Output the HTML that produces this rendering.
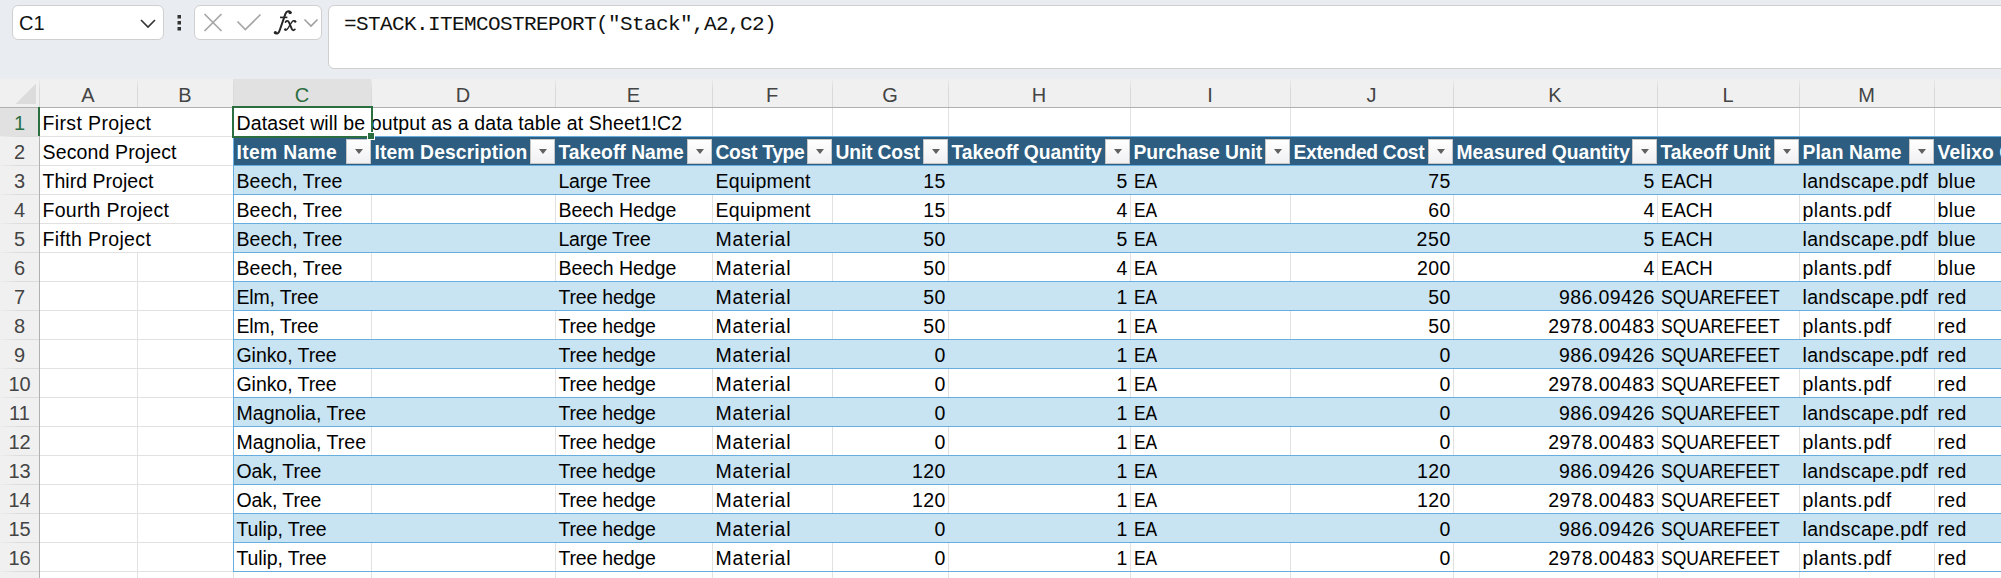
<!DOCTYPE html><html><head><meta charset="utf-8"><style>
*{box-sizing:border-box;margin:0;padding:0}
html,body{width:2001px;height:578px;overflow:hidden;background:#e9ecf0;font-family:"Liberation Sans",sans-serif;}
.a{position:absolute}
.t{position:absolute;white-space:pre;font-size:19.5px;line-height:29px;color:#000;}
.num{letter-spacing:0.3px}
.lc{letter-spacing:0.35px}
.cap{letter-spacing:-1.4px}

.r{text-align:right}
.h{font-weight:bold;color:#fff;font-size:19.3px;word-spacing:0}
.ch{position:absolute;top:81px;height:28px;text-align:center;font-size:20px;line-height:28px;color:#4a4a4a}
.rh{position:absolute;left:0;width:39px;text-align:center;font-size:20px;line-height:29px;color:#444}
.fb{position:absolute;width:25px;height:25px;background:linear-gradient(#fff,#f0f0f3);border:1px solid #c6c6c6;}
.fb:after{content:"";position:absolute;left:7.5px;top:9px;border-left:4.5px solid transparent;border-right:4.5px solid transparent;border-top:5.5px solid #606060}

</style></head><body>
<div class="a" style="left:12px;top:5px;width:152px;height:35px;background:#fff;border:1px solid #cfcfcf;border-radius:6px"></div>
<div class="a" style="left:19px;top:6px;font-size:20px;line-height:35px;color:#111">C1</div>
<svg class="a" style="left:138px;top:16px" width="20" height="14"><path d="M3 4 L10 11 L17 4" fill="none" stroke="#333" stroke-width="1.6"/></svg>
<svg class="a" style="left:175px;top:12px" width="8" height="22"><rect x="2.5" y="3" width="3.5" height="3.5" fill="#333"/><rect x="2.5" y="9" width="3.5" height="3.5" fill="#333"/><rect x="2.5" y="15" width="3.5" height="3.5" fill="#333"/></svg>
<div class="a" style="left:194px;top:5px;width:128px;height:35px;background:#fff;border:1px solid #cfcfcf;border-radius:6px"></div>
<svg class="a" style="left:200px;top:10px" width="125" height="30"><path d="M4.5 4 L21.5 21 M21.5 4 L4.5 21" stroke="#a6a6a6" stroke-width="1.7" fill="none"/><path d="M37.5 11.5 L45.3 19.5 L60.5 4.5" stroke="#a6a6a6" stroke-width="1.7" fill="none"/><path d="M104.5 9.5 L111 16 L117.5 9.5" stroke="#a0a0a0" stroke-width="1.6" fill="none"/></svg>
<svg class="a" style="left:0;top:0" width="330" height="45"><path d="M290.8 12.6 C289.8 10.4 286.6 10.6 285.4 13.8 L279.8 30.0 C278.8 33.4 276.6 34.4 275.0 32.8" fill="none" stroke="#262626" stroke-width="2.0" stroke-linecap="round"/><circle cx="290.0" cy="12.6" r="1.6" fill="#262626"/><circle cx="275.4" cy="32.6" r="1.6" fill="#262626"/><path d="M280.0 17.4 L287.4 17.4" stroke="#262626" stroke-width="1.6"/><path d="M285.6 22.0 C286.6 20.6 288.2 20.4 288.9 22.2 L291.9 29.0 C292.4 30.4 293.6 30.6 294.8 29.4" fill="none" stroke="#262626" stroke-width="1.9" stroke-linecap="round"/><path d="M295.6 21.4 C294.4 20.2 293.0 20.6 291.8 22.2 L288.2 27.8 C287.0 29.8 285.6 30.6 284.8 29.6" fill="none" stroke="#262626" stroke-width="1.3" stroke-linecap="round"/><circle cx="295.2" cy="21.6" r="1.2" fill="#262626"/><circle cx="285.4" cy="29.4" r="1.2" fill="#262626"/></svg>
<div class="a" style="left:328px;top:5px;width:1700px;height:64px;background:#fff;border:1px solid #cfcfcf;border-radius:6px"></div>
<div class="a" style="left:344px;top:10px;font-family:'Liberation Mono',monospace;font-size:21px;letter-spacing:-0.6px;line-height:30px;color:#111;white-space:pre">=STACK.ITEMCOSTREPORT("Stack",A2,C2)</div>
<div class="a" style="left:0;top:79px;width:2001px;height:499px;background:#fff"></div>
<div class="a" style="left:0;top:79px;width:2001px;height:28px;background:#f0f0f0"></div>
<div class="a" style="left:0;top:107px;width:39px;height:471px;background:#f0f0f0"></div>
<div class="a" style="left:233px;top:79px;width:138px;height:28px;background:#e1e1e1"></div>
<div class="a" style="left:0;top:107px;width:39px;height:29px;background:#e1e1e1"></div>
<svg class="a" style="left:0;top:79px" width="39" height="28"><path d="M36 4.5 L36 25 L15.5 25 Z" fill="#dcdcdc"/></svg>
<div class="a" style="left:39px;top:79px;width:1px;height:28px;background:linear-gradient(rgba(217,217,217,0.2),#d9d9d9 40%)"></div>
<div class="a" style="left:137px;top:79px;width:1px;height:28px;background:linear-gradient(rgba(217,217,217,0.2),#d9d9d9 40%)"></div>
<div class="a" style="left:233px;top:79px;width:1px;height:28px;background:linear-gradient(rgba(217,217,217,0.2),#d9d9d9 40%)"></div>
<div class="a" style="left:371px;top:79px;width:1px;height:28px;background:linear-gradient(rgba(217,217,217,0.2),#d9d9d9 40%)"></div>
<div class="a" style="left:555px;top:79px;width:1px;height:28px;background:linear-gradient(rgba(217,217,217,0.2),#d9d9d9 40%)"></div>
<div class="a" style="left:712px;top:79px;width:1px;height:28px;background:linear-gradient(rgba(217,217,217,0.2),#d9d9d9 40%)"></div>
<div class="a" style="left:832px;top:79px;width:1px;height:28px;background:linear-gradient(rgba(217,217,217,0.2),#d9d9d9 40%)"></div>
<div class="a" style="left:948px;top:79px;width:1px;height:28px;background:linear-gradient(rgba(217,217,217,0.2),#d9d9d9 40%)"></div>
<div class="a" style="left:1130px;top:79px;width:1px;height:28px;background:linear-gradient(rgba(217,217,217,0.2),#d9d9d9 40%)"></div>
<div class="a" style="left:1290px;top:79px;width:1px;height:28px;background:linear-gradient(rgba(217,217,217,0.2),#d9d9d9 40%)"></div>
<div class="a" style="left:1453px;top:79px;width:1px;height:28px;background:linear-gradient(rgba(217,217,217,0.2),#d9d9d9 40%)"></div>
<div class="a" style="left:1657px;top:79px;width:1px;height:28px;background:linear-gradient(rgba(217,217,217,0.2),#d9d9d9 40%)"></div>
<div class="a" style="left:1799px;top:79px;width:1px;height:28px;background:linear-gradient(rgba(217,217,217,0.2),#d9d9d9 40%)"></div>
<div class="a" style="left:1934px;top:79px;width:1px;height:28px;background:linear-gradient(rgba(217,217,217,0.2),#d9d9d9 40%)"></div>
<div class="a" style="left:0;top:107px;width:2001px;height:1px;background:#b0b0b0"></div>
<div class="a" style="left:39px;top:107px;width:1px;height:471px;background:#b0b0b0"></div>
<div class="ch" style="left:39px;width:98px;color:#444">A</div>
<div class="ch" style="left:137px;width:96px;color:#444">B</div>
<div class="ch" style="left:233px;width:138px;color:#2b6e3f">C</div>
<div class="ch" style="left:371px;width:184px;color:#444">D</div>
<div class="ch" style="left:555px;width:157px;color:#444">E</div>
<div class="ch" style="left:712px;width:120px;color:#444">F</div>
<div class="ch" style="left:832px;width:116px;color:#444">G</div>
<div class="ch" style="left:948px;width:182px;color:#444">H</div>
<div class="ch" style="left:1130px;width:160px;color:#444">I</div>
<div class="ch" style="left:1290px;width:163px;color:#444">J</div>
<div class="ch" style="left:1453px;width:204px;color:#444">K</div>
<div class="ch" style="left:1657px;width:142px;color:#444">L</div>
<div class="ch" style="left:1799px;width:135px;color:#444">M</div>
<div class="ch" style="left:1934px;width:146px;color:#444">N</div>
<div class="a" style="left:137px;top:252px;width:1px;height:326px;background:#e1e1e1"></div>
<div class="a" style="left:233px;top:108px;width:1px;height:470px;background:#e1e1e1"></div>
<div class="a" style="left:371px;top:136px;width:1px;height:442px;background:#e1e1e1"></div>
<div class="a" style="left:555px;top:136px;width:1px;height:442px;background:#e1e1e1"></div>
<div class="a" style="left:712px;top:108px;width:1px;height:470px;background:#e1e1e1"></div>
<div class="a" style="left:832px;top:108px;width:1px;height:470px;background:#e1e1e1"></div>
<div class="a" style="left:948px;top:108px;width:1px;height:470px;background:#e1e1e1"></div>
<div class="a" style="left:1130px;top:108px;width:1px;height:470px;background:#e1e1e1"></div>
<div class="a" style="left:1290px;top:108px;width:1px;height:470px;background:#e1e1e1"></div>
<div class="a" style="left:1453px;top:108px;width:1px;height:470px;background:#e1e1e1"></div>
<div class="a" style="left:1657px;top:108px;width:1px;height:470px;background:#e1e1e1"></div>
<div class="a" style="left:1799px;top:108px;width:1px;height:470px;background:#e1e1e1"></div>
<div class="a" style="left:1934px;top:108px;width:1px;height:470px;background:#e1e1e1"></div>
<div class="a" style="left:40px;top:136px;width:1961px;height:1px;background:#e1e1e1"></div>
<div class="a" style="left:0;top:136px;width:39px;height:1px;background:linear-gradient(to right,rgba(220,220,220,0.2),#dcdcdc 50%)"></div>
<div class="a" style="left:40px;top:165px;width:1961px;height:1px;background:#e1e1e1"></div>
<div class="a" style="left:0;top:165px;width:39px;height:1px;background:linear-gradient(to right,rgba(220,220,220,0.2),#dcdcdc 50%)"></div>
<div class="a" style="left:40px;top:194px;width:1961px;height:1px;background:#e1e1e1"></div>
<div class="a" style="left:0;top:194px;width:39px;height:1px;background:linear-gradient(to right,rgba(220,220,220,0.2),#dcdcdc 50%)"></div>
<div class="a" style="left:40px;top:223px;width:1961px;height:1px;background:#e1e1e1"></div>
<div class="a" style="left:0;top:223px;width:39px;height:1px;background:linear-gradient(to right,rgba(220,220,220,0.2),#dcdcdc 50%)"></div>
<div class="a" style="left:40px;top:252px;width:1961px;height:1px;background:#e1e1e1"></div>
<div class="a" style="left:0;top:252px;width:39px;height:1px;background:linear-gradient(to right,rgba(220,220,220,0.2),#dcdcdc 50%)"></div>
<div class="a" style="left:40px;top:281px;width:1961px;height:1px;background:#e1e1e1"></div>
<div class="a" style="left:0;top:281px;width:39px;height:1px;background:linear-gradient(to right,rgba(220,220,220,0.2),#dcdcdc 50%)"></div>
<div class="a" style="left:40px;top:310px;width:1961px;height:1px;background:#e1e1e1"></div>
<div class="a" style="left:0;top:310px;width:39px;height:1px;background:linear-gradient(to right,rgba(220,220,220,0.2),#dcdcdc 50%)"></div>
<div class="a" style="left:40px;top:339px;width:1961px;height:1px;background:#e1e1e1"></div>
<div class="a" style="left:0;top:339px;width:39px;height:1px;background:linear-gradient(to right,rgba(220,220,220,0.2),#dcdcdc 50%)"></div>
<div class="a" style="left:40px;top:368px;width:1961px;height:1px;background:#e1e1e1"></div>
<div class="a" style="left:0;top:368px;width:39px;height:1px;background:linear-gradient(to right,rgba(220,220,220,0.2),#dcdcdc 50%)"></div>
<div class="a" style="left:40px;top:397px;width:1961px;height:1px;background:#e1e1e1"></div>
<div class="a" style="left:0;top:397px;width:39px;height:1px;background:linear-gradient(to right,rgba(220,220,220,0.2),#dcdcdc 50%)"></div>
<div class="a" style="left:40px;top:426px;width:1961px;height:1px;background:#e1e1e1"></div>
<div class="a" style="left:0;top:426px;width:39px;height:1px;background:linear-gradient(to right,rgba(220,220,220,0.2),#dcdcdc 50%)"></div>
<div class="a" style="left:40px;top:455px;width:1961px;height:1px;background:#e1e1e1"></div>
<div class="a" style="left:0;top:455px;width:39px;height:1px;background:linear-gradient(to right,rgba(220,220,220,0.2),#dcdcdc 50%)"></div>
<div class="a" style="left:40px;top:484px;width:1961px;height:1px;background:#e1e1e1"></div>
<div class="a" style="left:0;top:484px;width:39px;height:1px;background:linear-gradient(to right,rgba(220,220,220,0.2),#dcdcdc 50%)"></div>
<div class="a" style="left:40px;top:513px;width:1961px;height:1px;background:#e1e1e1"></div>
<div class="a" style="left:0;top:513px;width:39px;height:1px;background:linear-gradient(to right,rgba(220,220,220,0.2),#dcdcdc 50%)"></div>
<div class="a" style="left:40px;top:542px;width:1961px;height:1px;background:#e1e1e1"></div>
<div class="a" style="left:0;top:542px;width:39px;height:1px;background:linear-gradient(to right,rgba(220,220,220,0.2),#dcdcdc 50%)"></div>
<div class="a" style="left:40px;top:571px;width:1961px;height:1px;background:#e1e1e1"></div>
<div class="a" style="left:0;top:571px;width:39px;height:1px;background:linear-gradient(to right,rgba(220,220,220,0.2),#dcdcdc 50%)"></div>
<div class="a" style="left:40px;top:600px;width:1961px;height:1px;background:#e1e1e1"></div>
<div class="a" style="left:0;top:600px;width:39px;height:1px;background:linear-gradient(to right,rgba(220,220,220,0.2),#dcdcdc 50%)"></div>
<div class="rh" style="top:109px;color:#2b6e3f">1</div>
<div class="rh" style="top:138px;color:#444">2</div>
<div class="rh" style="top:167px;color:#444">3</div>
<div class="rh" style="top:196px;color:#444">4</div>
<div class="rh" style="top:225px;color:#444">5</div>
<div class="rh" style="top:254px;color:#444">6</div>
<div class="rh" style="top:283px;color:#444">7</div>
<div class="rh" style="top:312px;color:#444">8</div>
<div class="rh" style="top:341px;color:#444">9</div>
<div class="rh" style="top:370px;color:#444">10</div>
<div class="rh" style="top:399px;color:#444">11</div>
<div class="rh" style="top:428px;color:#444">12</div>
<div class="rh" style="top:457px;color:#444">13</div>
<div class="rh" style="top:486px;color:#444">14</div>
<div class="rh" style="top:515px;color:#444">15</div>
<div class="rh" style="top:544px;color:#444">16</div>
<div class="rh" style="top:573px;color:#444">17</div>
<div class="a" style="left:233px;top:136px;width:1768px;height:30px;background:#2d5d80"></div>
<div class="a" style="left:233px;top:165px;width:1768px;height:29px;background:#c8e3f2"></div>
<div class="a" style="left:233px;top:223px;width:1768px;height:29px;background:#c8e3f2"></div>
<div class="a" style="left:233px;top:281px;width:1768px;height:29px;background:#c8e3f2"></div>
<div class="a" style="left:233px;top:339px;width:1768px;height:29px;background:#c8e3f2"></div>
<div class="a" style="left:233px;top:397px;width:1768px;height:29px;background:#c8e3f2"></div>
<div class="a" style="left:233px;top:455px;width:1768px;height:29px;background:#c8e3f2"></div>
<div class="a" style="left:233px;top:513px;width:1768px;height:29px;background:#c8e3f2"></div>
<div class="a" style="left:233px;top:165px;width:1768px;height:1px;background:#66ade0"></div>
<div class="a" style="left:233px;top:194px;width:1768px;height:1px;background:#66ade0"></div>
<div class="a" style="left:233px;top:223px;width:1768px;height:1px;background:#66ade0"></div>
<div class="a" style="left:233px;top:252px;width:1768px;height:1px;background:#66ade0"></div>
<div class="a" style="left:233px;top:281px;width:1768px;height:1px;background:#66ade0"></div>
<div class="a" style="left:233px;top:310px;width:1768px;height:1px;background:#66ade0"></div>
<div class="a" style="left:233px;top:339px;width:1768px;height:1px;background:#66ade0"></div>
<div class="a" style="left:233px;top:368px;width:1768px;height:1px;background:#66ade0"></div>
<div class="a" style="left:233px;top:397px;width:1768px;height:1px;background:#66ade0"></div>
<div class="a" style="left:233px;top:426px;width:1768px;height:1px;background:#66ade0"></div>
<div class="a" style="left:233px;top:455px;width:1768px;height:1px;background:#66ade0"></div>
<div class="a" style="left:233px;top:484px;width:1768px;height:1px;background:#66ade0"></div>
<div class="a" style="left:233px;top:513px;width:1768px;height:1px;background:#66ade0"></div>
<div class="a" style="left:233px;top:542px;width:1768px;height:1px;background:#66ade0"></div>
<div class="a" style="left:233px;top:571px;width:1768px;height:1px;background:#66ade0"></div>
<div class="a" style="left:233px;top:136px;width:1px;height:436px;background:#66ade0"></div>
<div class="a" style="left:233px;top:136px;width:1768px;height:1px;background:#66ade0"></div>
<div class="t " style="left:42.5px;top:109px;letter-spacing:0.367px">First Project</div>
<div class="t " style="left:42.5px;top:138px;letter-spacing:0.138px">Second Project</div>
<div class="t " style="left:42.5px;top:167px;letter-spacing:0.025px">Third Project</div>
<div class="t " style="left:42.5px;top:196px;letter-spacing:0.308px">Fourth Project</div>
<div class="t " style="left:42.5px;top:225px;letter-spacing:0.358px">Fifth Project</div>
<div class="t h" style="left:236.5px;top:138px;letter-spacing:0.325px">Item Name</div>
<div class="fb" style="left:346px;top:139px"></div>
<div class="t h" style="left:374.5px;top:138px;letter-spacing:0.12px">Item Description</div>
<div class="fb" style="left:530px;top:139px"></div>
<div class="t h" style="left:558.5px;top:138px;letter-spacing:0.023px">Takeoff Name</div>
<div class="fb" style="left:687px;top:139px"></div>
<div class="t h" style="left:715.5px;top:138px;letter-spacing:-0.312px">Cost Type</div>
<div class="fb" style="left:807px;top:139px"></div>
<div class="t h" style="left:835.5px;top:138px;letter-spacing:-0.156px">Unit Cost</div>
<div class="fb" style="left:923px;top:139px"></div>
<div class="t h" style="left:951.5px;top:138px;letter-spacing:-0.027px">Takeoff Quantity</div>
<div class="fb" style="left:1105px;top:139px"></div>
<div class="t h" style="left:1133.5px;top:138px;letter-spacing:-0.083px">Purchase Unit</div>
<div class="fb" style="left:1265px;top:139px"></div>
<div class="t h" style="left:1293.5px;top:138px;letter-spacing:-0.317px">Extended Cost</div>
<div class="fb" style="left:1428px;top:139px"></div>
<div class="t h" style="left:1456.5px;top:138px;letter-spacing:-0.006px">Measured Quantity</div>
<div class="fb" style="left:1632px;top:139px"></div>
<div class="t h" style="left:1660.5px;top:138px;letter-spacing:0.0px">Takeoff Unit</div>
<div class="fb" style="left:1774px;top:139px"></div>
<div class="t h" style="left:1802.5px;top:138px;letter-spacing:0.062px">Plan Name</div>
<div class="fb" style="left:1909px;top:139px"></div>
<div class="t h" style="left:1937.5px;top:138px;letter-spacing:0.1px">Velixo Color</div>
<div class="fb" style="left:2055px;top:139px"></div>
<div class="t " style="left:236.5px;top:167px;letter-spacing:0.08px">Beech, Tree</div>
<div class="t " style="left:558.5px;top:167px;letter-spacing:-0.222px">Large Tree</div>
<div class="t " style="left:715.5px;top:167px;letter-spacing:0.225px">Equipment</div>
<div class="t r num" style="left:832px;width:113.70px;top:167px;letter-spacing:0.4px">15</div>
<div class="t r num" style="left:948px;width:179.70px;top:167px;letter-spacing:0.4px">5</div>
<div class="t" style="left:1133.5px;top:167px;transform:scaleX(0.8917);transform-origin:0 0">EA</div>
<div class="t r num" style="left:1290px;width:160.70px;top:167px;letter-spacing:0.4px">75</div>
<div class="t r num" style="left:1453px;width:201.70px;top:167px;letter-spacing:0.4px">5</div>
<div class="t" style="left:1660.5px;top:167px;transform:scaleX(0.9529);transform-origin:0 0">EACH</div>
<div class="t lc" style="left:1802.5px;top:167px;letter-spacing:0.342px">landscape.pdf</div>
<div class="t lc" style="left:1937.5px;top:167px;letter-spacing:0.433px">blue</div>
<div class="t " style="left:236.5px;top:196px;letter-spacing:0.08px">Beech, Tree</div>
<div class="t " style="left:558.5px;top:196px;letter-spacing:-0.03px">Beech Hedge</div>
<div class="t " style="left:715.5px;top:196px;letter-spacing:0.225px">Equipment</div>
<div class="t r num" style="left:832px;width:113.70px;top:196px;letter-spacing:0.4px">15</div>
<div class="t r num" style="left:948px;width:179.70px;top:196px;letter-spacing:0.4px">4</div>
<div class="t" style="left:1133.5px;top:196px;transform:scaleX(0.8917);transform-origin:0 0">EA</div>
<div class="t r num" style="left:1290px;width:160.70px;top:196px;letter-spacing:0.4px">60</div>
<div class="t r num" style="left:1453px;width:201.70px;top:196px;letter-spacing:0.4px">4</div>
<div class="t" style="left:1660.5px;top:196px;transform:scaleX(0.9529);transform-origin:0 0">EACH</div>
<div class="t lc" style="left:1802.5px;top:196px;letter-spacing:0.467px">plants.pdf</div>
<div class="t lc" style="left:1937.5px;top:196px;letter-spacing:0.433px">blue</div>
<div class="t " style="left:236.5px;top:225px;letter-spacing:0.08px">Beech, Tree</div>
<div class="t " style="left:558.5px;top:225px;letter-spacing:-0.222px">Large Tree</div>
<div class="t " style="left:715.5px;top:225px;letter-spacing:0.814px">Material</div>
<div class="t r num" style="left:832px;width:113.70px;top:225px;letter-spacing:0.4px">50</div>
<div class="t r num" style="left:948px;width:179.70px;top:225px;letter-spacing:0.4px">5</div>
<div class="t" style="left:1133.5px;top:225px;transform:scaleX(0.8917);transform-origin:0 0">EA</div>
<div class="t r num" style="left:1290px;width:160.95px;top:225px;letter-spacing:0.65px">250</div>
<div class="t r num" style="left:1453px;width:201.70px;top:225px;letter-spacing:0.4px">5</div>
<div class="t" style="left:1660.5px;top:225px;transform:scaleX(0.9529);transform-origin:0 0">EACH</div>
<div class="t lc" style="left:1802.5px;top:225px;letter-spacing:0.342px">landscape.pdf</div>
<div class="t lc" style="left:1937.5px;top:225px;letter-spacing:0.433px">blue</div>
<div class="t " style="left:236.5px;top:254px;letter-spacing:0.08px">Beech, Tree</div>
<div class="t " style="left:558.5px;top:254px;letter-spacing:-0.03px">Beech Hedge</div>
<div class="t " style="left:715.5px;top:254px;letter-spacing:0.814px">Material</div>
<div class="t r num" style="left:832px;width:113.70px;top:254px;letter-spacing:0.4px">50</div>
<div class="t r num" style="left:948px;width:179.70px;top:254px;letter-spacing:0.4px">4</div>
<div class="t" style="left:1133.5px;top:254px;transform:scaleX(0.8917);transform-origin:0 0">EA</div>
<div class="t r num" style="left:1290px;width:160.70px;top:254px;letter-spacing:0.4px">200</div>
<div class="t r num" style="left:1453px;width:201.70px;top:254px;letter-spacing:0.4px">4</div>
<div class="t" style="left:1660.5px;top:254px;transform:scaleX(0.9529);transform-origin:0 0">EACH</div>
<div class="t lc" style="left:1802.5px;top:254px;letter-spacing:0.467px">plants.pdf</div>
<div class="t lc" style="left:1937.5px;top:254px;letter-spacing:0.433px">blue</div>
<div class="t " style="left:236.5px;top:283px;letter-spacing:-0.162px">Elm, Tree</div>
<div class="t " style="left:558.5px;top:283px;letter-spacing:-0.189px">Tree hedge</div>
<div class="t " style="left:715.5px;top:283px;letter-spacing:0.814px">Material</div>
<div class="t r num" style="left:832px;width:113.70px;top:283px;letter-spacing:0.4px">50</div>
<div class="t r num" style="left:948px;width:179.70px;top:283px;letter-spacing:0.4px">1</div>
<div class="t" style="left:1133.5px;top:283px;transform:scaleX(0.8917);transform-origin:0 0">EA</div>
<div class="t r num" style="left:1290px;width:160.70px;top:283px;letter-spacing:0.4px">50</div>
<div class="t r num" style="left:1453px;width:201.70px;top:283px;letter-spacing:0.4px">986.09426</div>
<div class="t" style="left:1660.5px;top:283px;transform:scaleX(0.8969);transform-origin:0 0">SQUAREFEET</div>
<div class="t lc" style="left:1802.5px;top:283px;letter-spacing:0.342px">landscape.pdf</div>
<div class="t lc" style="left:1937.5px;top:283px;letter-spacing:0.35px">red</div>
<div class="t " style="left:236.5px;top:312px;letter-spacing:-0.162px">Elm, Tree</div>
<div class="t " style="left:558.5px;top:312px;letter-spacing:-0.189px">Tree hedge</div>
<div class="t " style="left:715.5px;top:312px;letter-spacing:0.814px">Material</div>
<div class="t r num" style="left:832px;width:113.70px;top:312px;letter-spacing:0.4px">50</div>
<div class="t r num" style="left:948px;width:179.70px;top:312px;letter-spacing:0.4px">1</div>
<div class="t" style="left:1133.5px;top:312px;transform:scaleX(0.8917);transform-origin:0 0">EA</div>
<div class="t r num" style="left:1290px;width:160.70px;top:312px;letter-spacing:0.4px">50</div>
<div class="t r num" style="left:1453px;width:201.64px;top:312px;letter-spacing:0.344px">2978.00483</div>
<div class="t" style="left:1660.5px;top:312px;transform:scaleX(0.8969);transform-origin:0 0">SQUAREFEET</div>
<div class="t lc" style="left:1802.5px;top:312px;letter-spacing:0.467px">plants.pdf</div>
<div class="t lc" style="left:1937.5px;top:312px;letter-spacing:0.35px">red</div>
<div class="t " style="left:236.5px;top:341px;letter-spacing:-0.06px">Ginko, Tree</div>
<div class="t " style="left:558.5px;top:341px;letter-spacing:-0.189px">Tree hedge</div>
<div class="t " style="left:715.5px;top:341px;letter-spacing:0.814px">Material</div>
<div class="t r num" style="left:832px;width:113.70px;top:341px;letter-spacing:0.4px">0</div>
<div class="t r num" style="left:948px;width:179.70px;top:341px;letter-spacing:0.4px">1</div>
<div class="t" style="left:1133.5px;top:341px;transform:scaleX(0.8917);transform-origin:0 0">EA</div>
<div class="t r num" style="left:1290px;width:160.70px;top:341px;letter-spacing:0.4px">0</div>
<div class="t r num" style="left:1453px;width:201.70px;top:341px;letter-spacing:0.4px">986.09426</div>
<div class="t" style="left:1660.5px;top:341px;transform:scaleX(0.8969);transform-origin:0 0">SQUAREFEET</div>
<div class="t lc" style="left:1802.5px;top:341px;letter-spacing:0.342px">landscape.pdf</div>
<div class="t lc" style="left:1937.5px;top:341px;letter-spacing:0.35px">red</div>
<div class="t " style="left:236.5px;top:370px;letter-spacing:-0.06px">Ginko, Tree</div>
<div class="t " style="left:558.5px;top:370px;letter-spacing:-0.189px">Tree hedge</div>
<div class="t " style="left:715.5px;top:370px;letter-spacing:0.814px">Material</div>
<div class="t r num" style="left:832px;width:113.70px;top:370px;letter-spacing:0.4px">0</div>
<div class="t r num" style="left:948px;width:179.70px;top:370px;letter-spacing:0.4px">1</div>
<div class="t" style="left:1133.5px;top:370px;transform:scaleX(0.8917);transform-origin:0 0">EA</div>
<div class="t r num" style="left:1290px;width:160.70px;top:370px;letter-spacing:0.4px">0</div>
<div class="t r num" style="left:1453px;width:201.64px;top:370px;letter-spacing:0.344px">2978.00483</div>
<div class="t" style="left:1660.5px;top:370px;transform:scaleX(0.8969);transform-origin:0 0">SQUAREFEET</div>
<div class="t lc" style="left:1802.5px;top:370px;letter-spacing:0.467px">plants.pdf</div>
<div class="t lc" style="left:1937.5px;top:370px;letter-spacing:0.35px">red</div>
<div class="t " style="left:236.5px;top:399px;letter-spacing:0.046px">Magnolia, Tree</div>
<div class="t " style="left:558.5px;top:399px;letter-spacing:-0.189px">Tree hedge</div>
<div class="t " style="left:715.5px;top:399px;letter-spacing:0.814px">Material</div>
<div class="t r num" style="left:832px;width:113.70px;top:399px;letter-spacing:0.4px">0</div>
<div class="t r num" style="left:948px;width:179.70px;top:399px;letter-spacing:0.4px">1</div>
<div class="t" style="left:1133.5px;top:399px;transform:scaleX(0.8917);transform-origin:0 0">EA</div>
<div class="t r num" style="left:1290px;width:160.70px;top:399px;letter-spacing:0.4px">0</div>
<div class="t r num" style="left:1453px;width:201.70px;top:399px;letter-spacing:0.4px">986.09426</div>
<div class="t" style="left:1660.5px;top:399px;transform:scaleX(0.8969);transform-origin:0 0">SQUAREFEET</div>
<div class="t lc" style="left:1802.5px;top:399px;letter-spacing:0.342px">landscape.pdf</div>
<div class="t lc" style="left:1937.5px;top:399px;letter-spacing:0.35px">red</div>
<div class="t " style="left:236.5px;top:428px;letter-spacing:0.046px">Magnolia, Tree</div>
<div class="t " style="left:558.5px;top:428px;letter-spacing:-0.189px">Tree hedge</div>
<div class="t " style="left:715.5px;top:428px;letter-spacing:0.814px">Material</div>
<div class="t r num" style="left:832px;width:113.70px;top:428px;letter-spacing:0.4px">0</div>
<div class="t r num" style="left:948px;width:179.70px;top:428px;letter-spacing:0.4px">1</div>
<div class="t" style="left:1133.5px;top:428px;transform:scaleX(0.8917);transform-origin:0 0">EA</div>
<div class="t r num" style="left:1290px;width:160.70px;top:428px;letter-spacing:0.4px">0</div>
<div class="t r num" style="left:1453px;width:201.64px;top:428px;letter-spacing:0.344px">2978.00483</div>
<div class="t" style="left:1660.5px;top:428px;transform:scaleX(0.8969);transform-origin:0 0">SQUAREFEET</div>
<div class="t lc" style="left:1802.5px;top:428px;letter-spacing:0.467px">plants.pdf</div>
<div class="t lc" style="left:1937.5px;top:428px;letter-spacing:0.35px">red</div>
<div class="t " style="left:236.5px;top:457px;letter-spacing:-0.088px">Oak, Tree</div>
<div class="t " style="left:558.5px;top:457px;letter-spacing:-0.189px">Tree hedge</div>
<div class="t " style="left:715.5px;top:457px;letter-spacing:0.814px">Material</div>
<div class="t r num" style="left:832px;width:113.70px;top:457px;letter-spacing:0.4px">120</div>
<div class="t r num" style="left:948px;width:179.70px;top:457px;letter-spacing:0.4px">1</div>
<div class="t" style="left:1133.5px;top:457px;transform:scaleX(0.8917);transform-origin:0 0">EA</div>
<div class="t r num" style="left:1290px;width:160.70px;top:457px;letter-spacing:0.4px">120</div>
<div class="t r num" style="left:1453px;width:201.70px;top:457px;letter-spacing:0.4px">986.09426</div>
<div class="t" style="left:1660.5px;top:457px;transform:scaleX(0.8969);transform-origin:0 0">SQUAREFEET</div>
<div class="t lc" style="left:1802.5px;top:457px;letter-spacing:0.342px">landscape.pdf</div>
<div class="t lc" style="left:1937.5px;top:457px;letter-spacing:0.35px">red</div>
<div class="t " style="left:236.5px;top:486px;letter-spacing:-0.088px">Oak, Tree</div>
<div class="t " style="left:558.5px;top:486px;letter-spacing:-0.189px">Tree hedge</div>
<div class="t " style="left:715.5px;top:486px;letter-spacing:0.814px">Material</div>
<div class="t r num" style="left:832px;width:113.70px;top:486px;letter-spacing:0.4px">120</div>
<div class="t r num" style="left:948px;width:179.70px;top:486px;letter-spacing:0.4px">1</div>
<div class="t" style="left:1133.5px;top:486px;transform:scaleX(0.8917);transform-origin:0 0">EA</div>
<div class="t r num" style="left:1290px;width:160.70px;top:486px;letter-spacing:0.4px">120</div>
<div class="t r num" style="left:1453px;width:201.64px;top:486px;letter-spacing:0.344px">2978.00483</div>
<div class="t" style="left:1660.5px;top:486px;transform:scaleX(0.8969);transform-origin:0 0">SQUAREFEET</div>
<div class="t lc" style="left:1802.5px;top:486px;letter-spacing:0.467px">plants.pdf</div>
<div class="t lc" style="left:1937.5px;top:486px;letter-spacing:0.35px">red</div>
<div class="t " style="left:236.5px;top:515px;letter-spacing:-0.12px">Tulip, Tree</div>
<div class="t " style="left:558.5px;top:515px;letter-spacing:-0.189px">Tree hedge</div>
<div class="t " style="left:715.5px;top:515px;letter-spacing:0.814px">Material</div>
<div class="t r num" style="left:832px;width:113.70px;top:515px;letter-spacing:0.4px">0</div>
<div class="t r num" style="left:948px;width:179.70px;top:515px;letter-spacing:0.4px">1</div>
<div class="t" style="left:1133.5px;top:515px;transform:scaleX(0.8917);transform-origin:0 0">EA</div>
<div class="t r num" style="left:1290px;width:160.70px;top:515px;letter-spacing:0.4px">0</div>
<div class="t r num" style="left:1453px;width:201.70px;top:515px;letter-spacing:0.4px">986.09426</div>
<div class="t" style="left:1660.5px;top:515px;transform:scaleX(0.8969);transform-origin:0 0">SQUAREFEET</div>
<div class="t lc" style="left:1802.5px;top:515px;letter-spacing:0.342px">landscape.pdf</div>
<div class="t lc" style="left:1937.5px;top:515px;letter-spacing:0.35px">red</div>
<div class="t " style="left:236.5px;top:544px;letter-spacing:-0.12px">Tulip, Tree</div>
<div class="t " style="left:558.5px;top:544px;letter-spacing:-0.189px">Tree hedge</div>
<div class="t " style="left:715.5px;top:544px;letter-spacing:0.814px">Material</div>
<div class="t r num" style="left:832px;width:113.70px;top:544px;letter-spacing:0.4px">0</div>
<div class="t r num" style="left:948px;width:179.70px;top:544px;letter-spacing:0.4px">1</div>
<div class="t" style="left:1133.5px;top:544px;transform:scaleX(0.8917);transform-origin:0 0">EA</div>
<div class="t r num" style="left:1290px;width:160.70px;top:544px;letter-spacing:0.4px">0</div>
<div class="t r num" style="left:1453px;width:201.64px;top:544px;letter-spacing:0.344px">2978.00483</div>
<div class="t" style="left:1660.5px;top:544px;transform:scaleX(0.8969);transform-origin:0 0">SQUAREFEET</div>
<div class="t lc" style="left:1802.5px;top:544px;letter-spacing:0.467px">plants.pdf</div>
<div class="t lc" style="left:1937.5px;top:544px;letter-spacing:0.35px">red</div>
<div class="t" style="left:236.5px;top:109px;letter-spacing:0.13px">Dataset will be output as a data table at Sheet1!C2</div>
<div class="a" style="left:232px;top:106px;width:141px;height:32px;border:2px solid #2b6e3f"></div>
<div class="a" style="left:367px;top:132px;width:8px;height:8px;background:#2b6e3f;border:1px solid #fff"></div>
<div class="a" style="left:38px;top:107px;width:2px;height:29px;background:#2b6e3f"></div>
<div class="a" style="left:233px;top:106px;width:138px;height:2px;background:#2b6e3f"></div>
</body></html>
